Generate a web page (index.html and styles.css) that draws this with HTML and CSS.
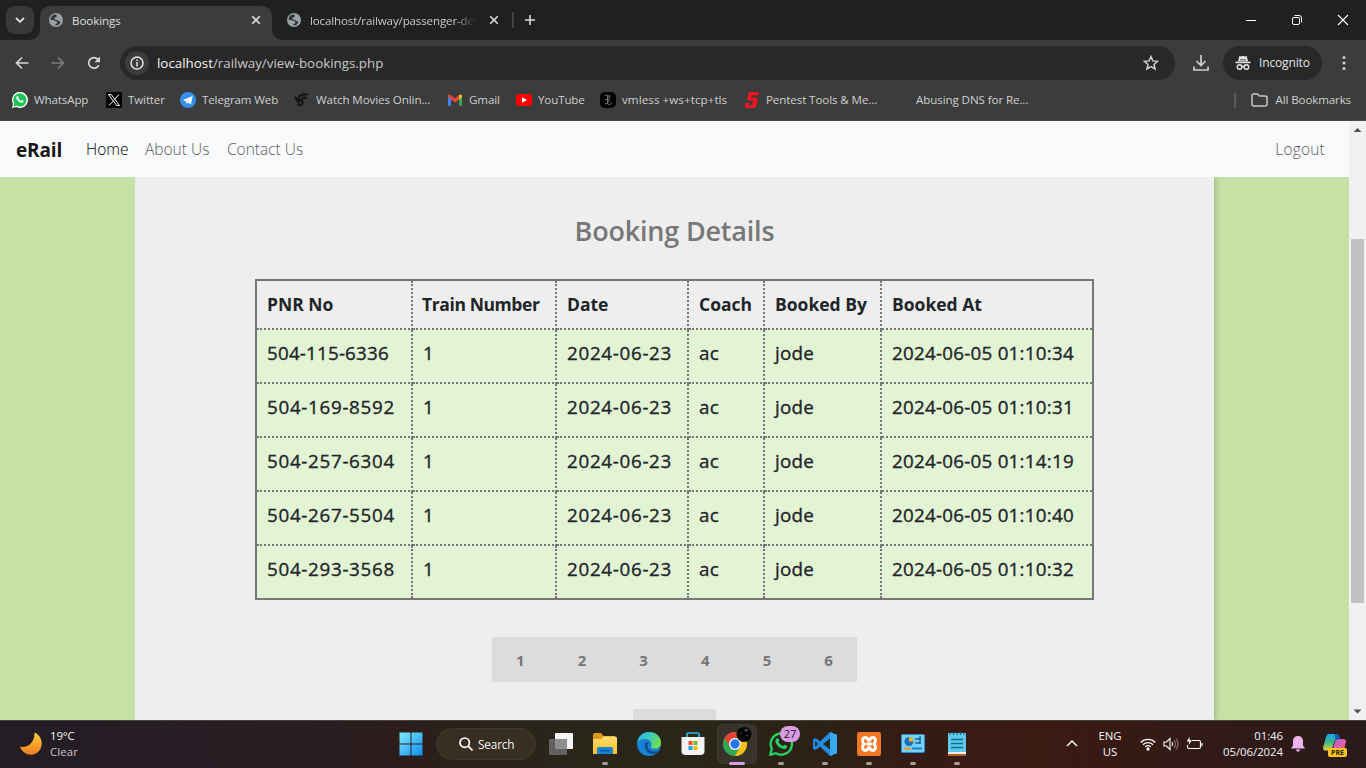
FILE: index.html
```html
<!DOCTYPE html>
<html lang="en">
<head>
<meta charset="utf-8">
<title>Bookings</title>
<link rel="stylesheet" href="styles.css">
</head>
<body>
<svg width="0" height="0" class="defs" aria-hidden="true">
  <defs>
    <symbol id="globe" viewBox="0 0 14 14"><circle cx="7" cy="7" r="7" fill="#9aa0a6"/><path d="M7.500 1.600c-2.200-.4-4.400.7-5.300 2.600L1.500 7l2.600 0c1.200 0 1.500.8 2.500 1l1.700.7v1.200l-2 1.500v1l3.200-.6 1.800-2.200c-.1-1-1-1.600-2-1.500-.8-1.300-1.800-1.400-3-1.400L5 5.200l1.600-1 1-.2z" fill="#303234"/></symbol>
    <symbol id="cross" viewBox="0 0 10 10"><path d="M1.200 1.200l7.600 7.600M8.800 1.200L1.200 8.800" stroke="#dedede" stroke-width="1.600" fill="none"/></symbol>
    <linearGradient id="gMoon" x1="0" y1="0" x2="0" y2="1"><stop offset="0" stop-color="#ffcf3a"/><stop offset="1" stop-color="#ef7d22"/></linearGradient>
    <linearGradient id="gWin" x1="0" y1="0" x2="1" y2="1"><stop offset="0" stop-color="#7deaff"/><stop offset="1" stop-color="#0f8fee"/></linearGradient>
    <linearGradient id="gFold" x1="0" y1="0" x2="0" y2="1"><stop offset="0" stop-color="#ffdf72"/><stop offset="1" stop-color="#f7bd23"/></linearGradient>
    <linearGradient id="gEdge" x1="0" y1="0" x2="1" y2=".5"><stop offset="0" stop-color="#2fb2ee"/><stop offset=".5" stop-color="#36cbc1"/><stop offset="1" stop-color="#70e04c"/></linearGradient>
    <linearGradient id="gCop" x1="0" y1="0" x2="0" y2="1"><stop offset="0" stop-color="#1ba5ef"/><stop offset=".5" stop-color="#35b68b"/><stop offset="1" stop-color="#f3cf2c"/></linearGradient>
    <linearGradient id="gCop2" x1="0" y1="0" x2="1" y2="1"><stop offset="0" stop-color="#ba62ea"/><stop offset="1" stop-color="#f5607a"/></linearGradient>
  </defs>
</svg>
<div class="screen">
  <header class="tabstrip">
    <button class="tab-search" aria-label="Search tabs"><svg width="10" height="6" viewBox="0 0 10 6"><path d="M1 1l4 3.800L9 1" fill="none" stroke="#e3e3e3" stroke-width="1.800"/></svg></button>
    <div class="tab tab-active"><svg width="14" height="14"><use href="#globe"/></svg><span class="tab-title">Bookings</span><svg width="10" height="10"><use href="#cross"/></svg></div>
    <div class="tab tab-idle"><svg width="14" height="14"><use href="#globe"/></svg><span class="tab-title tab-fade">localhost/railway/passenger-det</span><svg width="10" height="10"><use href="#cross"/></svg></div>
    <i class="tab-divider"></i>
    <svg class="new-tab" width="12" height="12" viewBox="0 0 12 12"><path d="M6 1v10M1 6h10" stroke="#d8d8d8" stroke-width="1.600"/></svg>
    <div class="window-buttons">
      <svg width="10" height="12" viewBox="0 0 10 12"><path d="M0 6.500h10" stroke="#fff"/></svg>
      <svg width="12" height="12" viewBox="0 0 12 12" fill="none" stroke="#fff"><rect x="1.500" y="3.500" width="7" height="7" rx="1.500"/><path d="M3.500 1.500h4.500a2.500 2.500 0 0 1 2.500 2.500v4.500"/></svg>
      <svg width="12" height="12" viewBox="0 0 12 12"><path d="M1 1l10 10M11 1L1 11" stroke="#fff" stroke-width="1.100"/></svg>
    </div>
  </header>

  <div class="toolbar">
    <svg class="tool back" width="14" height="14" viewBox="0 0 14 14" fill="none" stroke="#d5d5d5" stroke-width="1.700"><path d="M13.500 7H2M7 1.500L1.500 7 7 12.500"/></svg>
    <svg class="tool forward" width="14" height="14" viewBox="0 0 14 14" fill="none" stroke="#7c7c7c" stroke-width="1.700"><path d="M.5 7H12M7 1.500L12.500 7 7 12.500"/></svg>
    <svg class="tool reload" width="14" height="14" viewBox="0 0 14 14"><path d="M11.800 9.200A5.300 5.300 0 1 1 11 3.400l1.200 1.300" fill="none" stroke="#d5d5d5" stroke-width="1.700"/><path d="M13 .6v5.700H7.400z" fill="#d5d5d5"/></svg>
    <div class="omnibox">
      <span class="site-info"><svg width="14" height="14" viewBox="0 0 14 14"><circle cx="7" cy="7" r="6" fill="none" stroke="#e3e3e3" stroke-width="1.500"/><path d="M7 6v4.400M7 3.500v1.600" stroke="#e3e3e3" stroke-width="1.500"/></svg></span>
      <span class="url"><b>localhost</b>/railway/view-bookings.php</span>
      <svg class="star" width="16" height="16" viewBox="0 0 16 16"><path d="M8 1.600l1.850 4.300 4.700.4-3.550 3.100 1.100 4.600L8 11.600 3.900 14 5 9.400 1.450 6.300l4.700-.4z" fill="none" stroke="#d0d0d0" stroke-width="1.500"/></svg>
    </div>
    <svg class="download" width="16" height="16" viewBox="0 0 16 16" fill="none" stroke="#cfcfcf" stroke-width="1.700"><path d="M8 0v10M3.500 6L8 10.500 12.500 6M1 11.500V15h14v-3.500"/></svg>
    <div class="incognito"><svg width="16" height="16" viewBox="0 0 16 16"><path d="M4.300.9L6 1.400l2-.7 2 .7 1.700-.5L13 6.200H3z" fill="#e3e3e3"/><path d="M5 4.800h6" stroke="#282828" stroke-width=".8"/><path d="M.5 7.400h15" stroke="#e3e3e3" stroke-width="1.600"/><g fill="none" stroke="#e3e3e3" stroke-width="1.500"><circle cx="4.600" cy="12" r="2.300"/><circle cx="11.400" cy="12" r="2.300"/><path d="M6.900 11.600c.7-.4 1.500-.4 2.200 0"/></g></svg><span>Incognito</span></div>
    <svg class="menu" width="4" height="16" viewBox="0 0 4 16" fill="#d0d0d0"><circle cx="2" cy="2.500" r="1.500"/><circle cx="2" cy="8" r="1.500"/><circle cx="2" cy="13.500" r="1.500"/></svg>
  </div>

  <nav class="bookmarks">
    <a><svg width="16" height="16" viewBox="0 0 16 16"><path d="M0 16l1-4.200A8 8 0 1 1 4.300 15z" fill="#fff"/><path d="M1.500 14.500l.8-3A6.600 6.600 0 1 1 4.600 13.700z" fill="#19c655"/><path d="M5.200 4.200c.8-.5 1.200.3 1.500 1.200.2.500-.5.800-.4 1.200.5 1 1.400 1.800 2.600 2.300.5 0 .8-.9 1.200-.8l1.500.8c.2 1.200-1 1.900-2 1.800-2.600-.4-5.400-3-5.400-5 0-.6.500-1.200 1-1.500z" fill="#fff"/></svg><span>WhatsApp</span></a>
    <a><svg width="16" height="16" viewBox="0 0 16 16"><path d="M0 0h16v16H0z"/><path d="M2.500 2.500h2.700l8.300 11h-2.700zM13 2.500l-4.700 5.200M7.300 9L3 13.500" fill="none" stroke="#fff" stroke-width="1"/></svg><span>Twitter</span></a>
    <a><svg width="16" height="16" viewBox="0 0 16 16"><circle cx="8" cy="8" r="8" fill="#3390ec"/><path d="M3 8l9.600-4-1.700 8.600-3-2-1.500 1.400L6 9.400z" fill="#fff"/><path d="M6 9.400l4.700-3.800-3.500 4.600z" fill="#b8d8f7"/></svg><span>Telegram Web</span></a>
    <a><svg width="16" height="16" viewBox="0 0 16 16" fill="none" stroke="#171717" stroke-width="2.200" stroke-linecap="round"><path d="M13.500 2.500C9 2 5.500 3 4.500 6c-.5 2 1 2.500 3 2.500M12.500 5.800C9.500 5.200 7.500 6 8 8c.8 1.500 1.500 3.500-1 5.500M1.500 5.500C2 8 3 9 5 10M4 12.500h2"/></svg><span class="wide">Watch Movies Onlin...</span></a>
    <a><svg width="16" height="16" viewBox="0 0 16 16"><path d="M1 3v10.500h3V7.500l4 3 4-3v6h3V3l-2-.5L8 6.300 3 2.500z" fill="#ea4335"/><path d="M1 4.500v9h3V7z" fill="#4285f4"/><path d="M12 7v6.500h3v-9z" fill="#34a853"/><path d="M12 3.200l2-.7 1 1v2L12 7.500z" fill="#fbbc04"/></svg><span>Gmail</span></a>
    <a><svg width="16" height="16" viewBox="0 0 16 16"><rect y="2" width="16" height="12" rx="3" fill="#f00"/><path d="M6 5.300L11 8l-5 2.700z" fill="#fff"/></svg><span>YouTube</span></a>
    <a><svg width="16" height="16" viewBox="0 0 16 16"><rect width="16" height="16" rx="5"/><path d="M5 3.500h2.500v8.500M9 3v7.500M4.800 12.300c1.500-1.300 2.500-.8 3.700 0s2 .3 3-1.500M9 5l1.500-.8M5 7.500h2" fill="none" stroke="#808080" stroke-width=".9"/></svg><span class="wider">vmless +ws+tcp+tls</span></a>
    <a><svg width="16" height="16" viewBox="0 0 16 16"><path d="M5 0h10l-1 3.300H7.700L7.200 5.500H12q2 .3 1.700 2.500l-1.200 5.500Q12 16 9.500 16H2.700Q.5 16 1 13.500L1.500 11h4l-.4 2.200h3L9 8.500H3z" fill="#f01424"/></svg><span class="wide">Pentest Tools &amp; Me...</span></a>
    <a><i class="blank-icon"></i><span class="wide">Abusing DNS for Re...</span></a>
    <div class="all-bookmarks"><i></i><svg width="17" height="14" viewBox="0 0 17 14"><path d="M1 2.500V11q0 2 2 2h11q2 0 2-2V4.500q0-1.500-2-1.500H8.500l-2-2H2.500Q1 1 1 2.500z" fill="none" stroke="#c9c9c9" stroke-width="1.500"/></svg><span>All Bookmarks</span></div>
  </nav>

  <div class="viewport">
    <div class="page">
      <nav class="navbar">
        <a class="brand">eRail</a><a class="home">Home</a><a class="about">About Us</a><a class="contact">Contact Us</a><a class="logout">Logout</a>
      </nav>
      <main class="card">
        <h1>Booking Details</h1>
        <table class="bookings">
          <colgroup><col class="c-pnr"><col class="c-train"><col class="c-date"><col class="c-coach"><col class="c-by"><col class="c-at"></colgroup>
          <thead><tr><th>PNR No</th><th class="tight">Train Number</th><th>Date</th><th>Coach</th><th>Booked By</th><th>Booked At</th></tr></thead>
          <tbody>
            <tr><td class="pnr narrow">504-115-6336</td><td>1</td><td class="date">2024-06-23</td><td>ac</td><td>jode</td><td class="stamp">2024-06-05 01:10:34</td></tr>
            <tr><td class="pnr">504-169-8592</td><td>1</td><td class="date">2024-06-23</td><td>ac</td><td>jode</td><td class="stamp">2024-06-05 01:10:31</td></tr>
            <tr><td class="pnr">504-257-6304</td><td>1</td><td class="date">2024-06-23</td><td>ac</td><td>jode</td><td class="stamp">2024-06-05 01:14:19</td></tr>
            <tr><td class="pnr">504-267-5504</td><td>1</td><td class="date">2024-06-23</td><td>ac</td><td>jode</td><td class="stamp">2024-06-05 01:10:40</td></tr>
            <tr><td class="pnr">504-293-3568</td><td>1</td><td class="date">2024-06-23</td><td>ac</td><td>jode</td><td class="stamp">2024-06-05 01:10:32</td></tr>
          </tbody>
        </table>
        <div class="pagination"><a>1</a><a>2</a><a>3</a><a>4</a><a>5</a><a>6</a></div>
        <div class="next-button"></div>
      </main>
    </div>
    <div class="scrollbar">
      <svg width="17" height="17" viewBox="0 0 17 17"><path d="M4.500 11L8.500 7l4 4z" fill="#505050"/></svg>
      <i class="thumb"></i>
      <svg class="down" width="17" height="17" viewBox="0 0 17 17"><path d="M4.500 6.500l4 4 4-4z" fill="#505050"/></svg>
    </div>
  </div>

  <footer class="taskbar">
    <div class="weather">
      <svg width="22" height="23" viewBox="0 0 22 23"><path d="M14.500.5C20 3 23.300 9 21 15.500 18.500 22 12 24 7 22 3.500 20.800 1 18 0 14.500c7 2 15-4 14.500-14z" fill="url(#gMoon)"/></svg>
      <div><p>19°C</p><p class="dim">Clear</p></div>
    </div>
    <div class="apps">
      <span class="app"><svg width="24" height="24" viewBox="0 0 24 24" fill="url(#gWin)"><path d="M.5.500h11v11H.5zM12.500.5h11v11h-11zM.5 12.500h11v11H.5zM12.500 12.500h11v11h-11z"/></svg></span>
      <span class="search"><svg width="14" height="14" viewBox="0 0 14 14" fill="none" stroke="#fff" stroke-width="1.700"><circle cx="5.700" cy="5.700" r="4.700"/><path d="M9.200 9.200l4.300 4.300"/></svg>Search</span>
      <span class="app"><svg width="24" height="24" viewBox="0 0 24 24"><rect x="6" y="1" width="18" height="16" rx="1" fill="#f4f4f4"/><rect y="7" width="18" height="16" rx="1" fill="#686868" opacity=".9"/><path d="M6 7h12v10H6z" fill="#8d8d8d"/></svg></span>
      <span class="app running"><svg width="24" height="24" viewBox="0 0 24 24"><path d="M0 3q0-2 2-2h6l2.500 3H22v5H0z" fill="#d99a12"/><path d="M0 7h8l2.500-2.500H22q2 0 2 2V22H0z" fill="url(#gFold)"/><path d="M4 22v-5q0-2 2-2h12q2 0 2 2v5z" fill="#1684d4"/><path d="M7 18h10v1.500H7z" fill="#0b5ba6"/></svg></span>
      <span class="app"><svg width="24" height="24" viewBox="0 0 24 24"><circle cx="12" cy="12" r="12" fill="#1682d2"/><path d="M.3 10.500C1.500 4 6 0 12.500 0 19 0 24 5 24 10.500c0 4-2.800 6-6 6-3 0-4.500-1-4-2.300.8-1 .8-2 .5-3C13.500 8 11 7 8.500 7 4.500 7 1.500 8.500.3 10.500z" fill="url(#gEdge)"/><path d="M8 11c-1.500 6 3 11 7.500 11 3 0 5.200-1 7-3.500-5 2.500-12 .5-12-4.500 0-1.500.7-2.500 1.500-3.500-1-1-3.300-.7-4 .5z" fill="#124d91"/></svg></span>
      <span class="app"><svg width="24" height="24" viewBox="0 0 24 24"><path d="M6 6V2q0-1 1-1h10q1 0 1 1v4" fill="none" stroke="#2fb4ef" stroke-width="1.700"/><path d="M.5 5h23v14q0 4-4 4H4.500q-4 0-4-4z" fill="#f2f2f2"/><path fill="#f15124" d="M7.500 9h4v4h-4z"/><path fill="#7eb928" d="M12.500 9h4v4h-4z"/><path fill="#16a4e9" d="M7.500 14h4v4h-4z"/><path fill="#fbb915" d="M12.500 14h4v4h-4z"/></svg></span>
      <span class="app selected"><svg width="29" height="30" viewBox="0 0 29 30"><g transform="translate(0 5)"><circle cx="12" cy="12" r="12" fill="#31a852"/><path d="M1.600 6A12 12 0 0 1 22.400 6H12a6 6 0 0 0-5.200 9z" fill="#e94335"/><path d="M22.400 6A12 12 0 0 1 12 24l5.200-9A6 6 0 0 0 12 6z" fill="#fbc116"/><circle cx="12" cy="12" r="6" fill="#fff"/><circle cx="12" cy="12" r="4.700" fill="#2874e8"/></g><circle cx="21" cy="7.500" r="7.500" fill="#050505"/><path d="M21.500 3l3-.5-1 1.800zM17.500 7l1-1.500M23 9l2-1" stroke="#6b6b6b" stroke-width=".7" fill="#555"/></svg></span>
      <span class="app running"><svg width="25" height="24" viewBox="0 0 25 24"><path d="M1.300 22.700l1.500-6A10.600 10.600 0 1 1 7 21.200z" fill="none" stroke="#26cf65" stroke-width="2.400"/><path d="M8 6.300c1.200-.5 1.700.3 2.300 2 .3.800-.8 1.300-.6 2 .9 1.700 2.200 2.900 4.300 3.700.7 0 1-1.300 1.700-1.300l2.300 1.200c.7 1.800-1.500 3.300-3.200 3-4.100-.7-8.200-4.300-8.400-8 0-1.200.7-2.200 1.600-2.600z" fill="#26cf65"/></svg><b class="badge">27</b></span>
      <span class="app running"><svg width="24" height="24" viewBox="0 0 24 24"><path d="M17 0l7 3v18l-7 3L7 14.600 2.500 18 0 16.700V7.300L2.500 6 7 9.400z" fill="#218de0"/><path d="M17 6.500L10 12l7 5.500zM2.200 9v6L5 12z" fill="#29251a"/><path d="M17 0l7 3v18l-7 3z" fill="#38a8f4"/></svg></span>
      <span class="app running"><svg width="24" height="24" viewBox="0 0 24 24"><rect width="24" height="24" rx="2" fill="#f37623"/><path d="M8.500 5.500c3 0 2 3 3.500 3s.5-3 3.500-3 4 4 1.500 6.500c2.500 2.500 1.500 6.500-1.500 6.500s-2-3-3.500-3-.5 3-3.500 3S4.500 14.500 7 12C4.500 9.500 5.500 5.500 8.500 5.500z" fill="none" stroke="#fff" stroke-width="3"/><path d="M9 12h6" stroke="#fff" stroke-width="3"/></svg></span>
      <span class="app running"><svg width="24" height="20" viewBox="0 0 24 20"><rect x=".5" y=".500" width="23" height="18" rx="1" fill="#79d0f5" stroke="#208fd5"/><circle cx="8" cy="7.500" r="4.500" fill="#116fbd"/><path d="M8 7.500V3A4.500 4.500 0 0 1 12.500 7.500z" fill="#ffb01f"/><path d="M14 5h3l3-1M14 9h6M19 2v8" stroke="#1464a7" stroke-width="1.400" fill="none"/><path d="M3 14.500h7" stroke="#f39b1d" stroke-width="2"/><path d="M11 14.500h10" stroke="#1682ca" stroke-width="2"/></svg></span>
      <span class="app running"><svg width="18" height="24" viewBox="0 0 18 24"><path d="M0 1h18v23H0z" fill="#5dc8e8"/><path d="M0 20h18v2H0z" fill="#eee"/><path d="M0 22h18v2H0z" fill="#b85c1b"/><path d="M3 7.500h12M3 11.500h12M3 15.500h12" stroke="#126e91" stroke-width="1.500"/><path d="M2 0v3M5.500 0v3M9 0v3M12.500 0v3M16 0v3" stroke="#17647f"/></svg></span>
    </div>
    <div class="tray">
      <svg class="chevron" width="12" height="7" viewBox="0 0 12 7"><path d="M1 6l5-5 5 5" fill="none" stroke="#eee" stroke-width="1.500"/></svg>
      <div class="language"><p>ENG</p><p>US</p></div>
      <div class="status">
        <svg width="16" height="14" viewBox="0 0 16 14" fill="none" stroke="#f5f5f5" stroke-width="1.300"><path d="M.7 5.500a10.300 10.300 0 0 1 14.600 0M2.900 7.700a7.200 7.200 0 0 1 10.200 0M5.200 9.900a4 4 0 0 1 5.600 0"/><circle cx="8" cy="12" r="1" fill="#fff"/></svg>
        <svg width="16" height="14" viewBox="0 0 16 14" fill="none" stroke="#eee" stroke-width="1.200"><path d="M1 5h2.500L7 1.500v11L3.500 9H1zM9 5q1.500 2 0 4"/><path d="M11 3q3 4 0 8M13 1.500q4 5.500 0 11" stroke="#866b65"/></svg>
        <svg width="17" height="14" viewBox="0 0 17 14" fill="none" stroke="#f5f5f5" stroke-width="1.200"><path d="M6 3.500h7q1.500 0 1.500 1.500v5q0 1.500-1.500 1.500H3q-1.500 0-1.500-1.500V8M16 6v3"/><path d="M3.500 0L.8 4.500h2.500L2.500 8 6 3.200H3.700z" fill="#fff" stroke="none"/></svg>
      </div>
      <div class="clock"><p>01:46</p><p>05/06/2024</p></div>
      <svg class="bell" width="14" height="16" viewBox="0 0 14 16"><path d="M7 0c3.200 0 5 2.300 5 5v4.500l2 3H0l2-3V5c0-2.700 1.800-5 5-5zM4.800 13.500h4.400Q8.500 15.800 7 15.800T4.800 13.500z" fill="#edb5ed"/></svg>
      <div class="copilot"><svg width="23" height="20" viewBox="0 0 23 20"><path d="M5.500 0H13q2 0 3 2l1 3.500h-3.500Q12 5.500 11 9L9 14q-1 2.500-4 2.500H2.500Q-.5 16.500.2 13L3 3q.8-3 2.500-3z" fill="url(#gCop)"/><path d="M14 5h6q3.500 0 2.800 3.500L21 16H9.500L12 8q.5-2 2-3z" fill="url(#gCop2)"/><path d="M11.500 0H13q2 0 3 2l1 3.500h-3L12.500 6z" fill="#1659bd"/></svg><b>PRE</b></div>
    </div>
  </footer>
</div>
</body>
</html>
```
FILE: styles.css
```css
* { box-sizing: border-box; }
body { margin: 0; font-family: "Open Sans", "Noto Sans", sans-serif; }
p, h1 { margin: 0; }
svg { display: block; flex: none; }
.defs { position: absolute; }
.screen { width: 1366px; height: 768px; overflow: hidden; display: flex; flex-direction: column; background: #3c3c3c; }

/* Browser tabs */
.tabstrip { height: 40px; flex: none; background: #1f2120; display: flex; align-items: center; padding-left: 6px; }
.tab-search { width: 28px; height: 28px; padding: 0; border: 0; border-radius: 9px; background: #383938; display: grid; place-items: center; margin-right: 6px; }
.tab { display: flex; align-items: center; font-size: 11.600px; color: #dfdfdf; height: 28px; }
.tab-title { flex: 1; margin: 0 12px 0 9px; white-space: nowrap; line-height: 18px; letter-spacing: -.1px; }
.tab-active { position: relative; width: 232px; height: 34px; margin-top: 6px; padding: 0 11px 6px 9px; background: #3c3c3c; border-radius: 10px 10px 0 0; }
.tab-active .tab-title { padding-top: 1px; }
.tab-active::before, .tab-active::after { content: ""; position: absolute; bottom: 0; width: 10px; height: 10px; }
.tab-active::before { left: -10px; background: radial-gradient(circle at 0 0, transparent 9.500px, #3c3c3c 10px); }
.tab-active::after { right: -10px; background: radial-gradient(circle at 100% 0, transparent 9.500px, #3c3c3c 10px); }
.tab-idle { width: 212px; margin-left: 15px; color: #c8c8c8; }
.tab-idle .tab-title { width: 168px; flex: none; margin-right: 11px; padding-top: 1px; letter-spacing: -.15px; }
.tab-fade { mask-image: linear-gradient(90deg, #000 86%, transparent 99%); }
.tab-divider { width: 2px; height: 16px; margin-left: 13px; background: #424342; }
.new-tab { margin-left: 10px; }
.window-buttons { margin-left: auto; padding-right: 17px; display: flex; align-items: center; gap: 35px; }
.window-buttons svg:first-child, .window-buttons svg:nth-child(2) { margin-left: 1px; margin-right: -1px; }

/* Address bar */
.toolbar { height: 46px; flex: none; display: flex; align-items: center; padding-left: 15px; }
.forward { margin-left: 22px; }
.reload { margin-left: 22px; }
.omnibox { width: 1055px; height: 34px; margin-left: 19px; padding: 0 16px 0 5px; border-radius: 17px; background: #282828; display: flex; align-items: center; }
.site-info { width: 24px; height: 24px; border-radius: 50%; background: #3c3c3c; display: grid; place-items: center; }
.url { flex: 1; margin-left: 8px; font-size: 13.400px; color: #c7c7c7; letter-spacing: -.02px; }
.url b { font-weight: 400; color: #f3f3f3; }
.download { margin-left: 18px; }
.incognito { width: 99px; height: 34px; margin-left: 14px; padding: 0 0 1px 12px; border-radius: 17px; background: #282828; display: flex; align-items: center; gap: 8px; color: #e3e3e3; font-size: 12px; letter-spacing: -.15px; }
.menu { margin-left: 20px; }

.bookmarks { height: 35px; flex: none; border-bottom: 1px solid #4a4a4a; padding: 0 15px 6px 12px; display: grid; grid-template-columns: 94px 74px 114px 153px 69px 84px 144px 150px 140px 1fr; align-items: center; font-size: 11.600px; color: #cfcfcf; white-space: nowrap; letter-spacing: -.14px; }
.bookmarks a { display: flex; align-items: center; gap: 6px; }
.bookmarks span { padding-bottom: 2px; }
.bookmarks .wide { letter-spacing: -.1px; }
.bookmarks .wider { letter-spacing: .08px; }
.blank-icon { width: 16px; }
.all-bookmarks { display: flex; align-items: center; justify-content: flex-end; gap: 8px; }
.all-bookmarks i { width: 2px; height: 15px; margin-right: 7px; background: #5c5c5c; }

/* Web page */
.viewport { height: 599px; flex: none; display: flex; }
.page { width: 1349px; height: 599px; overflow: hidden; background: #c5e1a5; }
.navbar { position: relative; height: 56px; padding: 0 24px 0 16px; display: flex; align-items: center; background: #f8fafc; font-size: 15.500px; font-weight: 300; color: #5c5c5c; }
.brand { width: 70px; font-size: 19px; font-weight: 700; color: #171717; letter-spacing: -.15px; padding-top: 1px; }
.home { width: 59px; color: #000; }
.about { width: 82px; }
.logout { margin-left: auto; letter-spacing: .2px; }
.card { width: 1079px; height: 543px; margin-left: 135px; padding-top: 33px; background: #eee; box-shadow: 2px 0 5px rgba(0, 0, 0, .16); display: flex; flex-direction: column; align-items: center; clip-path: inset(0 -8px 0 0); }
.card h1 { height: 42px; line-height: 42px; font-size: 27px; font-weight: 600; color: #777; letter-spacing: -.2px; }
.bookings { width: 839px; height: 321px; margin-top: 27px; flex: none; border: 2px solid #777; border-collapse: collapse; table-layout: fixed; color: #212529; }
.c-pnr { width: 156px; } .c-train { width: 144px; } .c-date { width: 132px; }
.c-coach { width: 76px; } .c-by { width: 117px; } .c-at { width: 212px; }
.bookings th, .bookings td { border: 2px dotted #777; padding: 0 0 0 10px; text-align: left; white-space: nowrap; }
.bookings th:first-child, .bookings td:first-child { border-left: 2px solid #777; }
.bookings th:last-child, .bookings td:last-child { border-right: 2px solid #777; }
.bookings th { height: 49px; padding-bottom: 2px; font-size: 17.500px; font-weight: 700; border-top: 2px solid #777; }
.bookings th.tight { padding-left: 9px; letter-spacing: -.4px; }
.bookings td { height: 54px; padding-bottom: 7px; background: #e3f4d4; font-size: 18.800px; letter-spacing: .2px; -webkit-text-stroke: .35px #212529; }
.bookings td.pnr { letter-spacing: .7px; }
.bookings td.narrow { letter-spacing: .2px; }
.bookings td.date { letter-spacing: .7px; }
.bookings td.stamp { letter-spacing: .25px; }
.bookings tr:last-child td { border-bottom: 2px solid #777; }
.pagination { width: 365px; height: 45px; margin-top: 37px; padding: 0 24px; flex: none; display: flex; align-items: center; justify-content: space-between; background: #dcdcdc; color: #777; font-size: 15px; font-weight: 700; }
.next-button { width: 83px; height: 40px; margin-top: 27px; flex: none; background: #dcdcdc; }
.scrollbar { width: 17px; height: 599px; background: #f1f1f1; display: flex; flex-direction: column; align-items: center; }
.thumb { width: 13px; height: 364px; margin-top: 101px; background: #c1c1c1; }
.down { margin-top: auto; }

/* Desktop taskbar */
.taskbar { height: 48px; flex: none; padding-bottom: 2px; display: grid; grid-template-columns: 389px 590px 1fr; border-top: 1px solid #46443f; background: linear-gradient(90deg, #241d24 0, #2a1e24 22%, #2c1d1b 29%, #29251a 40%, #292517 51%, #2d2115 60%, #351b14 67%, #3b1a12 76%, #321a17 88%, #291b1a 100%); color: #f5f5f5; font-size: 11.400px; line-height: 16px; }
.weather { padding-left: 20px; display: flex; align-items: center; gap: 8px; letter-spacing: -.1px; }
.weather .dim { color: #c9c4c8; letter-spacing: .1px; }
.apps { display: flex; align-items: center; }
.app { position: relative; width: 44px; height: 40px; display: grid; place-items: center; }
.search { width: 100px; height: 32px; margin: 0 3px; border-radius: 16px; padding-left: 22px; background: #392e22; border: 1px solid #41362a; display: flex; align-items: center; gap: 5px; font-size: 11.800px; letter-spacing: -.15px; }
.running::after, .selected::after { content: ""; position: absolute; bottom: -1px; left: 19px; width: 6px; height: 3px; border-radius: 2px; background: #a49f98; }
.selected { background: #38332a; border: 1px solid #413a30; border-radius: 5px; width: 36px; margin: 0 6px 0 2px; box-shadow: 3px 0 #38332a, 4px 0 #413a30; }
.selected svg { margin-bottom: 4px; margin-left: 5px; }
.selected::after { left: 11px; bottom: -2px; width: 16px; background: #d89ee2; }
.badge { position: absolute; left: 21px; top: 2px; width: 20px; height: 16px; border-radius: 8px; background: #d99be3; color: #241b26; font-size: 11px; font-weight: 400; line-height: 15px; text-align: center; }
.tray { display: flex; align-items: center; padding-left: 87px; white-space: nowrap; }
.language { width: 38px; margin-left: 13px; text-align: center; }
.status { margin-left: 11px; display: flex; gap: 7px; align-items: center; }
.clock { width: 70px; margin-left: 10px; text-align: right; letter-spacing: -.05px; }
.bell { margin-left: 8px; }
.copilot { position: relative; margin-left: 18px; }
.copilot b { position: absolute; left: 5px; top: 14px; width: 19px; height: 9px; border-radius: 2px; background: #fbc51b; color: #241b00; font-size: 7px; line-height: 9px; text-align: center; }
```
